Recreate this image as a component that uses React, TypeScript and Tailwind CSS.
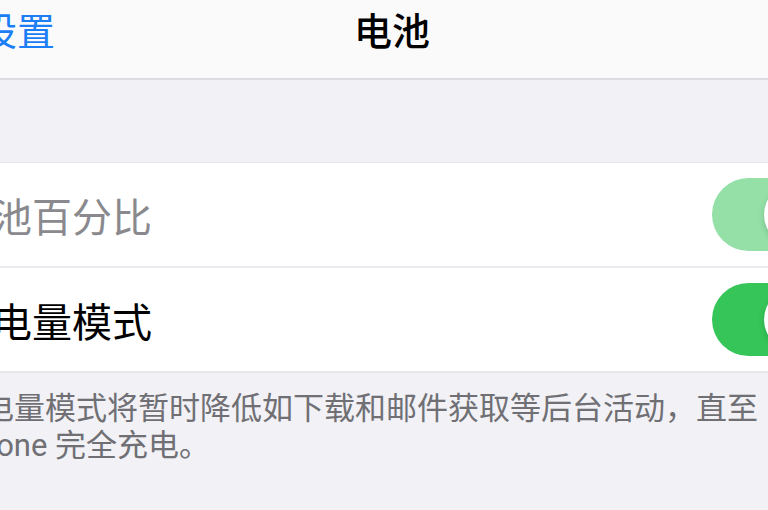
import React, { useState } from 'react';

const cjk = { fontFamily: '"Noto Sans CJK SC", "Noto Sans", sans-serif' };
const mixed = { fontFamily: 'Roboto, "Noto Sans CJK SC", sans-serif' };

interface ToggleRowProps {
  label: string;
  on: boolean;
  dimmed?: boolean;
  onToggle?: () => void;
}

const ToggleRow: React.FC<ToggleRowProps> = ({ label, on, dimmed, onToggle }) => (
  <div className="flex h-[103px] items-center justify-between overflow-hidden bg-white">
    <span className={`ml-[-48px] text-[40px] leading-none ${dimmed ? 'text-[#8a8a8e]' : 'text-black'}`} style={cjk}>
      {label}
    </span>
    <button
      onClick={onToggle}
      className={`mr-[-64px] flex h-[73px] w-[120px] shrink-0 items-center rounded-full px-[5px] ${
        on ? (dimmed ? 'justify-end bg-[#94e0a7]' : 'justify-end bg-[#36c558]') : 'justify-start bg-[#e5e5ea]'
      }`}
    >
      <span className="h-[63px] w-[63px] rounded-full bg-white shadow-[0_3px_6px_rgba(0,0,0,0.15)]" />
    </button>
  </div>
);

export default function App() {
  const [lowPower, setLowPower] = useState(true);

  return (
    <div className="h-[510px] w-[768px] overflow-hidden bg-[#f1f1f6]">
      {/* nav bar */}
      <div className="flex h-[78px] items-center overflow-hidden bg-[#fafafb] pb-[20px]">
        <span className="ml-[-21px] text-[38px] leading-none text-[#1b7ef6]" style={cjk}>
          设置
        </span>
        <span className="ml-[299px] text-[38px] font-medium leading-none text-black" style={cjk}>
          电池
        </span>
      </div>
      <div className="h-[2px] bg-[#dcdce1]" />

      <div className="h-[82px]" />

      <div className="h-[1px] bg-[#e3e3e8]" />
      <ToggleRow label="电池百分比" on dimmed />
      <div className="h-[2px] bg-[#ececf0]" />
      <ToggleRow label="低电量模式" on={lowPower} onToggle={() => setLowPower(!lowPower)} />
      <div className="h-[2px] bg-[#e6e6eb]" />

      <div className="ml-[-48px] w-[830px] pt-[17px] text-[31px] leading-[37px] text-[#6f6f74]" style={mixed}>
        <div className="whitespace-nowrap">低电量模式将暂时降低如下载和邮件获取等后台活动，直至</div>
        <div className="whitespace-nowrap">iPhone 完全充电。</div>
      </div>
    </div>
  );
}
